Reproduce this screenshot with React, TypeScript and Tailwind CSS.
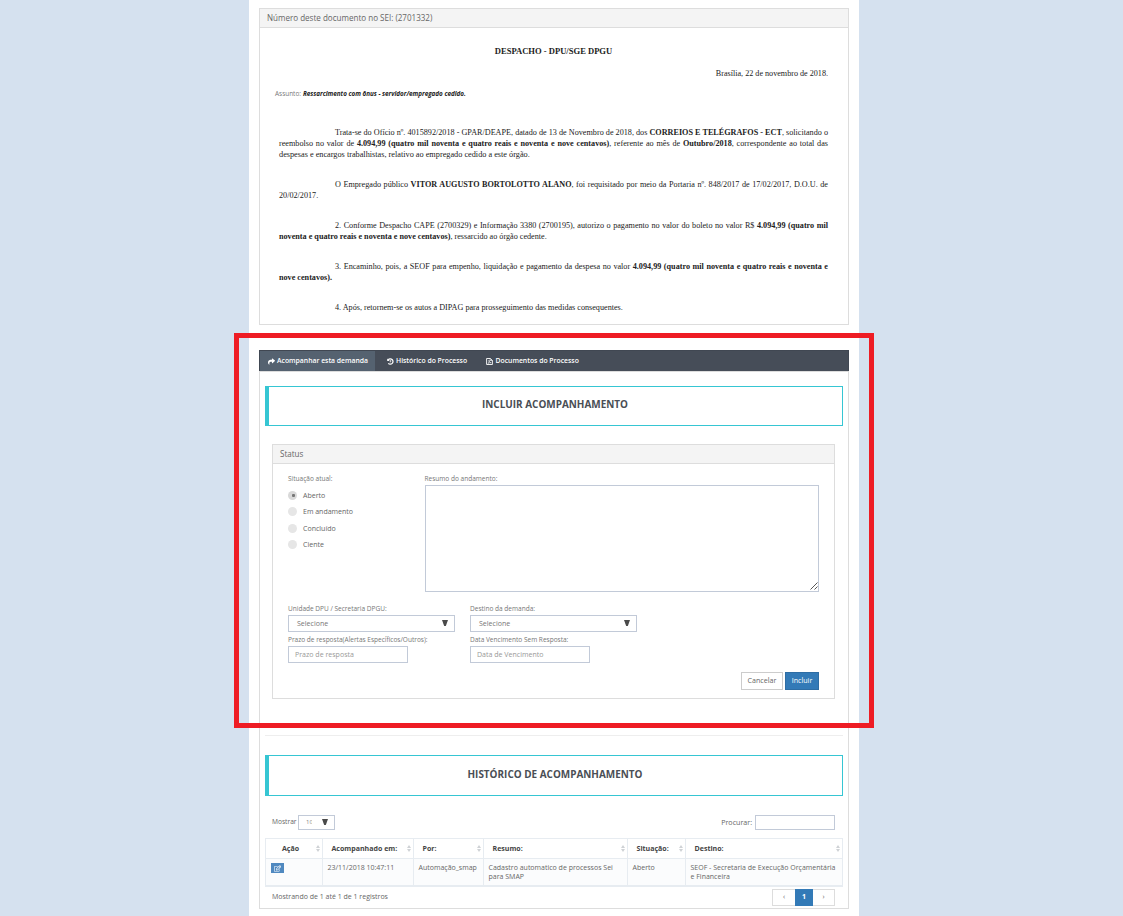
import React from "react";
import { FaShare, FaRegEdit } from "react-icons/fa";

function Panel({ title, className, children }: { title: string; className: string; children: React.ReactNode }) {
  return (
    <section className={`flex flex-col border border-[#dddddd] bg-white ${className}`}>
      <header className="flex h-[19px] shrink-0 items-center border-b border-[#dddddd] bg-[#f4f4f4] pl-[7px] text-[8.05px] text-[#666666]">
        {title}
      </header>
      {children}
    </section>
  );
}

function Line({ indent, last, children }: { indent?: boolean; last?: boolean; children: React.ReactNode }) {
  return (
    <div
      className={`h-[11px] whitespace-nowrap ${indent ? "pl-[56px]" : ""} ${
        last ? "" : "[text-align-last:justify]"
      }`}
    >
      {children}
    </div>
  );
}

function Heading({ className, children }: { className: string; children: React.ReactNode }) {
  return (
    <h2
      className={`flex shrink-0 justify-center border border-l-4 border-[#36c6d3] pr-px text-[9.95px] leading-[16px] font-bold text-[#4a4e55] ${className}`}
    >
      {children}
    </h2>
  );
}

function Label({ children }: { children: React.ReactNode }) {
  return <div className="text-[6.52px] leading-[9px] whitespace-nowrap text-[#777777]">{children}</div>;
}

function Arrow() {
  return (
    <svg className="mb-px h-[6px] w-[6px] text-[#4a4a4a]" viewBox="0 0 6 6">
      <path d="M0 0H6L3.8 6H2.2Z" fill="currentColor" />
    </svg>
  );
}

function HistoryIcon() {
  return (
    <svg className="h-[7px] w-[7px]" viewBox="0 0 7 7" fill="none" stroke="currentColor">
      <path d="M1.2 1.8A2.7 2.7 0 1 1 1.3 5.3" strokeWidth="1.2" />
      <path d="M0.2 0.5V3.1H2.8Z" fill="currentColor" stroke="none" />
      <path d="M3.7 2V3.9H2.6" strokeWidth="0.8" />
    </svg>
  );
}

function DocumentIcon() {
  return (
    <svg className="h-[7px] w-[7px]" viewBox="0 0 7 7" fill="none" stroke="currentColor">
      <path d="M0.6 0.5H4.3L6.4 2.4V6.5H0.6Z" strokeWidth="0.9" />
      <path d="M4.2 0.5V2.5H6.4" strokeWidth="0.7" />
      <path d="M2 5.4C3 4.6 3.2 3.6 3 2.2C3.3 3.9 4 4.6 5.2 4.7C4 4.5 3 4.8 2 5.4Z" strokeWidth="0.6" />
    </svg>
  );
}

function Select() {
  return (
    <div className="flex h-[17px] w-[167px] items-center justify-between border border-[#c2cad8] pr-[6px] pl-[8px] text-[7.05px] text-[#777777]">
      <span>Selecione</span>
      <Arrow />
    </div>
  );
}

function Input({ children }: { children: React.ReactNode }) {
  return (
    <div className="flex h-[17px] w-[120px] items-center border border-[#c2cad8] pl-[6px] text-[7.04px] text-[#999999]">
      {children}
    </div>
  );
}

function Radio({ checked, label, className }: { checked?: boolean; label: string; className: string }) {
  return (
    <div className={`flex items-start text-[7.03px] leading-[9px] text-[#666666] ${className}`}>
      <span
        className={`mr-[6px] flex h-[9px] w-[9px] items-center justify-center rounded-full ${
          checked ? "bg-[#d9d9d9]" : "bg-[#e6e6e6]"
        }`}
      >
        {checked && <span className="ml-px h-[3px] w-[3px] rounded-[1px] bg-[#777777]" />}
      </span>
      {label}
    </div>
  );
}

function Sorter() {
  return (
    <svg className="h-[7px] w-[4px]" viewBox="0 0 4 7">
      <path d="M2 0L4 3H0ZM2 7L4 4H0Z" fill="#cfd2d6" />
    </svg>
  );
}

const columns = [
  { title: "Ação", head: "w-[57px] pl-[16px]" },
  { title: "Acompanhado em:", head: "w-[91px] pl-[8.5px]" },
  { title: "Por:", head: "w-[70px] pl-[8.5px]" },
  { title: "Resumo:", head: "w-[144px] pl-[8.5px]" },
  { title: "Situação:", head: "w-[58px] pl-[8.5px]" },
  { title: "Destino:", head: "w-[157px] pl-[8.5px]" },
];

const cells = [
  { text: "23/11/2018 10:47:11", box: "w-[91px]" },
  { text: "Automação_smap", box: "w-[70px]" },
  { text: "Cadastro automatico de processos Sei\npara SMAP", box: "w-[144px]" },
  { text: "Aberto", box: "w-[58px]" },
  { text: "SEOF - Secretaria de Execução Orçamentária\ne Financeira", box: "w-[157px]" },
];

export default function App() {
  return (
    <div className="relative flex h-[916px] w-[1123px] justify-center overflow-hidden bg-[#d5e1ef] pr-[15px] font-['Open_Sans',sans-serif]">
      <main className="flex h-full w-[610px] flex-col bg-white px-[10px] pt-[8px]">
        <Panel title="Número deste documento no SEI: (2701332)" className="h-[317px] shrink-0">
          <div className="pr-[20px] pl-[19px] font-['Liberation_Serif',serif] text-[8.17px] leading-[11px] text-[#222222]">
            <h1 className="mt-[18px] text-center text-[8.55px] leading-[11px] font-bold">DESPACHO - DPU/SGE DPGU</h1>
            <p className="mt-[11px] text-right text-[8.13px]">Brasília, 22 de novembro de 2018.</p>
            <p className="mt-[9px] -ml-[4px] flex gap-[2px] font-['Open_Sans',sans-serif] text-[6.45px]">
              <span className="text-[#777777]">Assunto:</span>
              <b className="text-[6.3px] italic">Ressarcimento com ônus - servidor/empregado cedido.</b>
            </p>
            <div className="mt-[28px] flex flex-col gap-[19px]">
              <div>
                <Line indent>
                  Trata-se do Ofício nº. 4015892/2018 - GPAR/DEAPE, datado de 13 de Novembro de 2018, dos{" "}
                  <b>CORREIOS E TELÉGRAFOS - ECT</b>, solicitando o
                </Line>
                <Line>
                  reembolso no valor de <b>4.094,99 (quatro mil noventa e quatro reais e noventa e nove centavos)</b>,
                  referente ao mês de <b>Outubro/2018</b>, correspondente ao total das
                </Line>
                <Line last>
                  <span className="text-[8.26px]">
                    despesas e encargos trabalhistas, relativo ao empregado cedido a este órgão.
                  </span>
                </Line>
              </div>
              <div>
                <Line indent>
                  O Empregado público <b>VITOR AUGUSTO BORTOLOTTO ALANO</b>, foi requisitado por meio da Portaria nº.
                  848/2017 de 17/02/2017, D.O.U. de
                </Line>
                <Line last>20/02/2017.</Line>
              </div>
              <div>
                <Line indent>
                  2. Conforme Despacho CAPE (2700329) e Informação 3380 (2700195), autorizo o pagamento no valor do
                  boleto no valor R$ <b>4.094,99 (quatro mil</b>
                </Line>
                <Line last>
                  <b>noventa e quatro reais e noventa e nove centavos)</b>, ressarcido ao órgão cedente.
                </Line>
              </div>
              <div>
                <Line indent>
                  3. Encaminho, pois, a SEOF para empenho, liquidação e pagamento da despesa no valor{" "}
                  <b>4.094,99 (quatro mil noventa e quatro reais e noventa e</b>
                </Line>
                <Line last>
                  <b>nove centavos).</b>
                </Line>
              </div>
              <Line indent last>
                4. Após, retornem-se os autos a DIPAG para prosseguimento das medidas consequentes.
              </Line>
            </div>
          </div>
        </Panel>

        <nav className="mt-[25px] flex h-[21px] shrink-0 border-x border-t border-[#404752] bg-[#464d58] text-[6.83px] font-semibold whitespace-nowrap text-white">
          <span className="flex w-[115px] items-center gap-[2px] bg-[#556270] pl-[8px]">
            <FaShare className="h-[7px] w-[7px]" />
            Acompanhar esta demanda
          </span>
          <span className="flex w-[99px] items-center gap-[2px] pl-[12px]">
            <HistoryIcon />
            Histórico do Processo
          </span>
          <span className="flex items-center gap-[2.5px] pl-[12px]">
            <DocumentIcon />
            Documentos do Processo
          </span>
        </nav>

        <div className="flex h-[538px] shrink-0 flex-col border border-[#dddddd] px-[5px] pt-[14px]">
          <Heading className="h-[40px] pt-[9px]">INCLUIR ACOMPANHAMENTO</Heading>

          <Panel title="Status" className="mx-[7px] mt-[18px] h-[255px] w-[563px] shrink-0">
            <div className="pt-[10px] pr-[15px] pl-[15px]">
              <div className="flex">
                <div className="w-[136.5px]">
                  <Label>Situação atual:</Label>
                  <div className="-mb-px">
                    <Radio checked label="Aberto" className="mt-[7.5px]" />
                    <Radio label="Em andamento" className="mt-[7.5px]" />
                    <Radio label="Concluído" className="mt-[7.5px]" />
                    <Radio label="Ciente" className="mt-[7.5px]" />
                  </div>
                </div>
                <div>
                  <Label>Resumo do andamento:</Label>
                  <div className="mt-[2px] ml-[0.5px] flex h-[107px] w-[394px] items-end justify-end border border-[#c2cad8] pb-px">
                    <svg className="h-[8px] w-[8px]" viewBox="0 0 8 8">
                      <path d="M0.5 7.5L7.5 0.5M4.5 7.5L7.5 4.5" stroke="#444444" strokeWidth="0.9" fill="none" />
                    </svg>
                  </div>
                </div>
              </div>
              <div className="mt-[12px] flex gap-[15px]">
                <div className="w-[167px]">
                  <Label>Unidade DPU / Secretaria DPGU:</Label>
                  <div className="mt-[2px]">
                    <Select />
                  </div>
                  <div className="mt-[3px]">
                    <Label>Prazo de resposta(Alertas Específicos/Outros):</Label>
                  </div>
                  <div className="mt-[2px]">
                    <Input>Prazo de resposta</Input>
                  </div>
                </div>
                <div className="w-[167px]">
                  <Label>Destino da demanda:</Label>
                  <div className="mt-[2px]">
                    <Select />
                  </div>
                  <div className="mt-[3px]">
                    <Label>Data Vencimento Sem Resposta:</Label>
                  </div>
                  <div className="mt-[2px]">
                    <Input>Data de Vencimento</Input>
                  </div>
                </div>
              </div>
              <div className="mt-[9px] flex justify-end gap-[2px] text-[7.1px]">
                <span className="flex h-[18px] w-[42px] items-center justify-center border border-[#cccccc] pb-px text-[#666666]">
                  Cancelar
                </span>
                <span className="flex h-[18px] w-[34px] items-center justify-center border border-[#2e6da4] bg-[#337ab7] pb-px text-white">
                  Incluir
                </span>
              </div>
            </div>
          </Panel>

          <hr className="mt-[36px] border-[#eeeeee]" />
          <Heading className="mt-[19px] h-[41px] pt-[10px]">HISTÓRICO DE ACOMPANHAMENTO</Heading>

          <div className="mt-[19px] flex h-[15px] shrink-0 items-center justify-between px-[7px] text-[7.1px] text-[#666666]">
            <div className="flex items-center">
              <span className="w-[26px] pb-px text-[6.61px]">Mostrar</span>
              <span className="flex h-[15px] w-[37px] items-center justify-between border border-[#c2cad8] pr-[6px] pl-[7px] text-[6px]">
                <span className="w-[6px] overflow-hidden text-[#888888]">10</span>
                <Arrow />
              </span>
            </div>
            <div className="mr-px flex items-center gap-[3px]">
              <span className="pb-px">Procurar:</span>
              <span className="h-[15px] w-[80px] border border-[#c2cad8]" />
            </div>
          </div>

          <div className="mt-[8px] flex h-[49px] w-[578px] shrink-0 flex-col border-t border-l border-[#e7ecf1]">
            <div className="flex h-[20px] border-b border-[#e7ecf1] text-[7.06px] font-bold text-[#444444]">
              {columns.map((c) => (
                <div
                  key={c.title}
                  className={`flex items-center justify-between border-r border-[#e7ecf1] pr-[2.5px] ${c.head}`}
                >
                  {c.title}
                  <Sorter />
                </div>
              ))}
            </div>
            <div className="flex h-[28px] border-b-2 border-[#e7ecf1] bg-[#fbfcfd] text-[7px] leading-[9px] text-[#666666]">
              <div className="w-[57px] border-r border-[#e7ecf1] pt-[4px] pl-[5px]">
                <span className="flex h-[10px] w-[13px] items-center justify-center bg-[#5089c0] text-white">
                  <FaRegEdit className="h-[7px] w-[7px]" />
                </span>
              </div>
              {cells.map((c) => (
                <div
                  key={c.text}
                  className={`border-r border-[#e7ecf1] pt-[4px] pl-[4.5px] whitespace-pre ${c.box}`}
                >
                  {c.text}
                </div>
              ))}
            </div>
          </div>

          <div className="mt-[2px] flex h-[17px] shrink-0 justify-between px-[7px] text-[7px] text-[#666666]">
            <span className="leading-[15px]">Mostrando de 1 até 1 de 1 registros</span>
            <div className="mr-px flex text-[7px]">
              <span className="flex w-[23px] items-center justify-center border border-r-0 border-[#dddddd]">‹</span>
              <span className="flex w-[18px] items-center justify-center bg-[#337ab7] font-bold text-white">1</span>
              <span className="flex w-[22px] items-center justify-center border border-l-0 border-[#dddddd]">›</span>
            </div>
          </div>
        </div>
      </main>

      <div className="pointer-events-none absolute top-[333px] left-[234px] h-[395px] w-[640px] border-5 border-[#ee1c24]" />
    </div>
  );
}
